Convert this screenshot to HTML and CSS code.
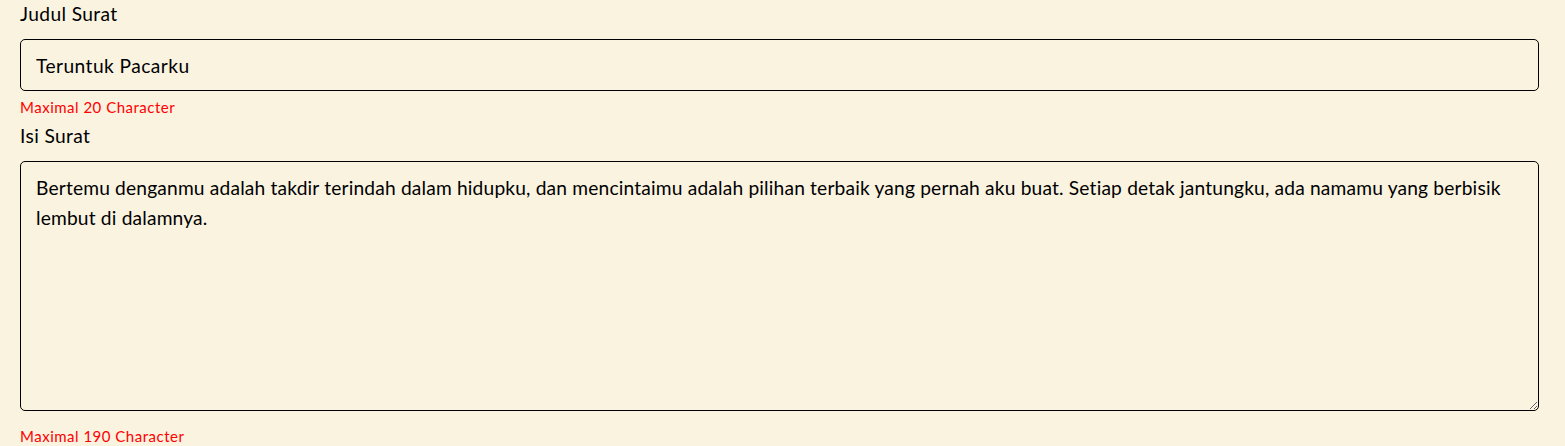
FILE: index.html
```html
<!DOCTYPE html>
<html lang="id">
<head>
<meta charset="utf-8">
<title>Surat</title>
<link rel="stylesheet" href="styles.css">
</head>
<body>
<form class="form">
  <div class="field">
    <label class="label" for="judul">Judul Surat</label>
    <input class="input" id="judul" type="text" value="Teruntuk Pacarku">
    <div class="hint">Maximal 20 Character</div>
  </div>
  <div class="field">
    <label class="label" for="isi">Isi Surat</label>
    <textarea class="textarea" id="isi">Bertemu denganmu adalah takdir terindah dalam hidupku, dan mencintaimu adalah pilihan terbaik yang pernah aku buat. Setiap detak jantungku, ada namamu yang berbisik lembut di dalamnya.</textarea>
    <div class="hint hint-last">Maximal 190 Character</div>
  </div>
</form>
</body>
</html>
```
FILE: styles.css
```css
html, body {
  margin: 0;
  padding: 0;
  background: #faf3e0;
}
body {
  font-family: Lato, "Noto Sans", sans-serif;
  color: #000;
}
.form {
  display: flex;
  flex-direction: column;
  gap: 4px;
  padding: 0 26px 0 20px;
}
.field {
  display: flex;
  flex-direction: column;
}
.label {
  font-size: 19.2px;
  line-height: 27px;
  letter-spacing: 0.37px;
  margin-bottom: 12px;
}
.input,
.textarea {
  box-sizing: border-box;
  width: 100%;
  font-family: Lato, "Noto Sans", sans-serif;
  font-size: 19.2px;
  color: #000;
  background: #faf3e0;
  border: 1px solid #000;
  border-radius: 5px;
  outline: none;
  margin: 0;
}
.input {
  height: 52px;
  padding: 0 15px;
  letter-spacing: 0.44px;
}
.textarea {
  display: block;
  height: 250px;
  padding: 11px 15px;
  line-height: 30px;
  letter-spacing: 0.17px;
  resize: vertical;
}
.hint {
  font-size: 15px;
  line-height: 21px;
  letter-spacing: 0.5px;
  color: #f00;
  margin-top: 6px;
}
.hint-last {
  margin-top: 15px;
}
```
